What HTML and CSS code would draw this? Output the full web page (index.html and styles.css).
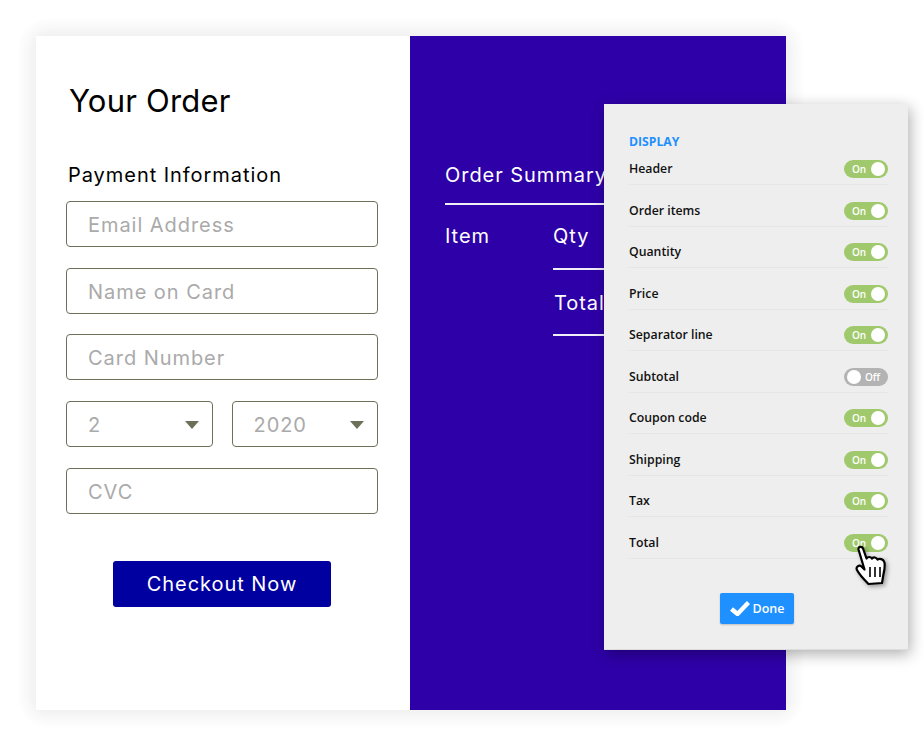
FILE: index.html
```html
<!DOCTYPE html>
<html lang="en">
<head>
    <meta charset="UTF-8">
    <meta name="viewport" content="width=device-width, initial-scale=1.0">
    <title>Order Display Settings</title>
    <link rel="stylesheet" href="styles.css">
</head>
<body>
    <div class="order-card">
        <div class="payment-panel">
            <h1 class="order-title">Your Order</h1>
            <div class="payment-label">Payment Information</div>
            <div class="fields">
                <div class="field">Email Address</div>
                <div class="field">Name on Card</div>
                <div class="field">Card Number</div>
                <div class="field-pair">
                    <div class="field select">2</div>
                    <div class="field select">2020</div>
                </div>
                <div class="field">CVC</div>
            </div>
            <div class="checkout-button">Checkout Now</div>
        </div>

        <div class="summary-panel">
            <div class="summary-title">Order Summary</div>
            <div class="summary-table">
                <div class="summary-item">Item</div>
                <div class="summary-rest">
                    <div class="summary-qty">Qty</div>
                    <div class="summary-total">Total</div>
                </div>
            </div>
        </div>

        <div class="display-popup">
            <div class="popup-heading">DISPLAY</div>
            <div class="popup-row"><span>Header</span><span class="toggle">On</span></div>
            <div class="popup-row"><span>Order items</span><span class="toggle">On</span></div>
            <div class="popup-row"><span>Quantity</span><span class="toggle">On</span></div>
            <div class="popup-row"><span>Price</span><span class="toggle">On</span></div>
            <div class="popup-row"><span>Separator line</span><span class="toggle">On</span></div>
            <div class="popup-row"><span>Subtotal</span><span class="toggle off">Off</span></div>
            <div class="popup-row"><span>Coupon code</span><span class="toggle">On</span></div>
            <div class="popup-row"><span>Shipping</span><span class="toggle">On</span></div>
            <div class="popup-row"><span>Tax</span><span class="toggle">On</span></div>
            <div class="popup-row"><span>Total</span><span class="toggle">On</span></div>
            <div class="popup-footer">
                <div class="done-button">
                    <svg class="done-check" viewBox="0 0 20 15" width="20" height="15">
                        <path d="M1.5 8 L7.5 13 L18.5 1.5" fill="none" stroke="#fff" stroke-width="4.4"/>
                    </svg>
                    <span>Done</span>
                </div>
            </div>
            <svg class="hand-cursor" viewBox="0 0 36 42" width="36" height="42">
                <path d="M3.5 4.5 C3 1.5 7 1 8 3.5 L11.5 13.5 C13 11.5 15.5 11.5 17 13.5 C18.5 12 21 12 22.5 14.5 C24.5 13 28.5 14 29.5 17.5 C30 21 29.5 25 28.5 29 L27 38 L13.5 39 C10 35.5 4 29 2 25 C0.5 22 4 19.5 6.5 21.5 L9.5 24.5 Z" fill="#fff" stroke="#000" stroke-width="2.2" stroke-linejoin="round"/>
                <path d="M15 22 V32 M20 22 V32 M25 22 V32" fill="none" stroke="#000" stroke-width="1.6"/>
            </svg>
        </div>
    </div>
</body>
</html>
```

FILE: styles.css
```css
body {
    margin: 0;
    padding: 36px;
    background: #fff;
    overflow: hidden;
    font-family: Inter, "Liberation Sans", sans-serif;
}
.order-card {
    position: relative;
    display: flex;
    width: 750px;
    height: 674px;
    border-radius: 12px;
    box-shadow: 0 0 6px 15px rgba(0, 0, 0, 0.025), 0 0 10px 5px rgba(0, 0, 0, 0.035);
}

/* left side */
.payment-panel {
    width: 374px;
    box-sizing: border-box;
    padding: 47px 32px 0 30px;
    background: #fff;
}
.order-title {
    margin: 0 0 0 3px;
    font-size: 31px;
    line-height: 36px;
    font-weight: 400;
    letter-spacing: 0.2px;
    color: #000;
}
.payment-label {
    margin: 44px 0 14px 2px;
    font-size: 20px;
    line-height: 24px;
    letter-spacing: 0.95px;
    color: #000;
}
.fields {
    display: flex;
    flex-direction: column;
    gap: 20.7px;
}
.field-pair {
    display: flex;
    justify-content: space-between;
}
.field-pair .field {
    width: 146.5px;
}
.field {
    box-sizing: border-box;
    height: 46px;
    padding-left: 21px;
    border: 1px solid #6b7059;
    border-radius: 4px;
    font-size: 20px;
    line-height: 47.6px;
    letter-spacing: 0.95px;
    color: #aaa;
}
.select {
    position: relative;
}
.select::after {
    content: "";
    position: absolute;
    top: 19px;
    right: 13px;
    border-top: 8px solid #6b7059;
    border-left: 7.5px solid transparent;
    border-right: 7.5px solid transparent;
}
.checkout-button {
    width: 218px;
    height: 46px;
    margin: 47px auto 0;
    background: #0000a0;
    border-radius: 3px;
    font-size: 20px;
    line-height: 46px;
    letter-spacing: 0.95px;
    text-align: center;
    color: #fff;
}

/* right side */
.summary-panel {
    flex: 1;
    box-sizing: border-box;
    padding: 127px 0 0 35px;
    background: #2e00a8;
    color: #fff;
    font-size: 20px;
    line-height: 24px;
    letter-spacing: 0.95px;
}
.summary-title {
    padding-bottom: 16px;
    border-bottom: 2px solid #f0eef8;
}
.summary-table {
    display: flex;
    margin-top: 19px;
}
.summary-item {
    width: 108px;
}
.summary-rest {
    flex: 1;
}
.summary-qty {
    padding-bottom: 20px;
    border-bottom: 2px solid #f0eef8;
}
.summary-total {
    padding: 21px 0 19px 1px;
    border-bottom: 2px solid #f0eef8;
}

/* display settings popup */
.display-popup {
    position: absolute;
    top: 68px;
    left: 568px;
    width: 304px;
    height: 546px;
    box-sizing: border-box;
    padding: 30px 20px 0 25px;
    background: #eee;
    border-bottom: 1px solid #ddd;
    box-shadow: 2px 4px 14px rgba(0, 0, 0, 0.32);
    font-family: "Open Sans", "Liberation Sans", sans-serif;
}
.popup-heading {
    margin-bottom: -1px;
    font-size: 12.2px;
    line-height: 16px;
    font-weight: 700;
    color: #1e90ff;
}
.popup-row {
    display: flex;
    justify-content: space-between;
    align-items: flex-start;
    box-sizing: border-box;
    height: 41.5px;
    padding: 16.5px 0 6px;
    border-bottom: 1px solid #e6e6e6;
    font-size: 12.3px;
    line-height: 17.5px;
    font-weight: 600;
    color: #111;
}
.popup-heading + .popup-row {
    height: 36px;
    padding-top: 11px;
}
.toggle {
    position: relative;
    box-sizing: border-box;
    width: 44px;
    height: 18px;
    padding-left: 8px;
    background: #a0c96d;
    border-radius: 9px;
    font-size: 10px;
    line-height: 19px;
    color: #fff;
}
.toggle::after {
    content: "";
    position: absolute;
    top: 2px;
    right: 3px;
    width: 14px;
    height: 14px;
    background: #fff;
    border-radius: 50%;
}
.toggle.off {
    padding-left: 21px;
    background: #b3b3b3;
}
.toggle.off::after {
    left: 3px;
    right: auto;
}
.popup-footer {
    display: flex;
    justify-content: center;
    margin: 34px 0 0 -3px;
}
.done-button {
    display: flex;
    align-items: center;
    justify-content: center;
    gap: 3px;
    width: 74px;
    height: 31px;
    background: #1e90ff;
    border-radius: 2px;
    box-shadow: 0 1px 2px rgba(0, 0, 0, 0.2);
    font-size: 12.5px;
    font-weight: 600;
    color: #fff;
}
.hand-cursor {
    position: absolute;
    top: 441px;
    left: 251px;
    filter: drop-shadow(2px 2px 2px rgba(0, 0, 0, 0.35));
}
```
